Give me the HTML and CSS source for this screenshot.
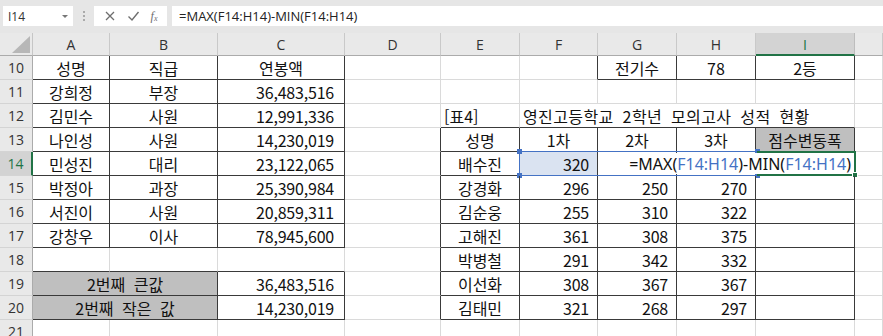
FILE: index.html
```html
<!DOCTYPE html>
<html lang="ko">
<head>
<meta charset="utf-8">
<title>Excel</title>
<link rel="stylesheet" href="styles.css">
</head>
<body>
<div class="app">
  <div class="fbar">
    <div class="namebox"><span>I14</span><span class="dd"></span></div>
    <div class="sep"><i></i><i></i><i></i></div>
    <div class="btns">
      <svg width="12" height="12" viewBox="0 0 12 12"><path d="M2 2L10 10M10 2L2 10" stroke="#6e6e6e" stroke-width="1.3" fill="none"/></svg>
      <svg width="13" height="12" viewBox="0 0 13 12"><path d="M1.5 6.5L5 10L11.5 2" stroke="#6e6e6e" stroke-width="1.4" fill="none"/></svg>
      <span class="fx"><i>f</i><sub>x</sub></span>
    </div>
    <div class="finput">=MAX(F14:H14)-MIN(F14:H14)</div>
  </div>

  <div class="sheet">
    <div class="row hdr">
      <div class="corner"><div class="tri"></div></div>
      <div class="ch">A</div><div class="ch">B</div><div class="ch">C</div><div class="ch">D</div><div class="ch">E</div><div class="ch">F</div><div class="ch">G</div><div class="ch">H</div><div class="ch sel">I</div><div class="ch"></div>
    </div>

    <div class="row">
      <div class="rh">10</div>
      <div class="c ctr bb br">성명</div><div class="c ctr bb br">직급</div><div class="c ctr bb br">연봉액</div>
      <div class="c"></div><div class="c"></div><div class="c br"></div>
      <div class="c ctr bb br">전기수</div><div class="c ctr bb br">78</div><div class="c ctr bb br">2등</div><div class="c"></div>
    </div>

    <div class="row">
      <div class="rh">11</div>
      <div class="c ctr bb br">강희정</div><div class="c ctr bb br">부장</div><div class="c num numc bb br">36,483,516</div>
      <div class="c"></div><div class="c"></div><div class="c"></div><div class="c"></div><div class="c"></div><div class="c"></div><div class="c"></div>
    </div>

    <div class="row">
      <div class="rh">12</div>
      <div class="c ctr bb br">김민수</div><div class="c ctr bb br">사원</div><div class="c num numc bb br">12,991,336</div>
      <div class="c"></div>
      <div class="c lft bb">[표4]</div>
      <div class="c lft bb span4 title">영진고등학교 2학년 모의고사 성적 현황</div>
      <div class="c"></div>
    </div>

    <div class="row">
      <div class="rh">13</div>
      <div class="c ctr bb br">나인성</div><div class="c ctr bb br">사원</div><div class="c num numc bb br">14,230,019</div>
      <div class="c br"></div>
      <div class="c ctr bb br">성명</div><div class="c ctr bb br">1차</div><div class="c ctr bb br">2차</div><div class="c ctr bb br">3차</div><div class="c ctr bb br gray">점수변동폭</div>
      <div class="c"></div>
    </div>

    <div class="row r14">
      <div class="rh sel">14</div>
      <div class="c ctr bb br">민성진</div><div class="c ctr bb br">대리</div><div class="c num numc bb br">23,122,065</div>
      <div class="c br"></div>
      <div class="c ctr bb br">배수진</div><div class="c num bb br hl">320</div><div class="c bb br"></div><div class="c bb br"></div><div class="c bb br"></div>
      <div class="c"></div>
      <div class="refbox"><i class="h tl"></i><i class="h tr"></i><i class="h bl"></i><i class="h br2"></i></div>
      <div class="active"><i class="fill"></i></div>
      <div class="editor">=MAX(<span class="ref">F14:H14</span>)-MIN(<span class="ref">F14:H14</span>)</div>
    </div>

    <div class="row">
      <div class="rh">15</div>
      <div class="c ctr bb br">박정아</div><div class="c ctr bb br">과장</div><div class="c num numc bb br">25,390,984</div>
      <div class="c br"></div>
      <div class="c ctr bb br">강경화</div><div class="c num bb br">296</div><div class="c num bb br">250</div><div class="c num bb br">270</div><div class="c bb br"></div>
      <div class="c"></div>
    </div>

    <div class="row">
      <div class="rh">16</div>
      <div class="c ctr bb br">서진이</div><div class="c ctr bb br">사원</div><div class="c num numc bb br">20,859,311</div>
      <div class="c br"></div>
      <div class="c ctr bb br">김순웅</div><div class="c num bb br">255</div><div class="c num bb br">310</div><div class="c num bb br">322</div><div class="c bb br"></div>
      <div class="c"></div>
    </div>

    <div class="row">
      <div class="rh">17</div>
      <div class="c ctr bb br">강창우</div><div class="c ctr bb br">이사</div><div class="c num numc bb br">78,945,600</div>
      <div class="c br"></div>
      <div class="c ctr bb br">고해진</div><div class="c num bb br">361</div><div class="c num bb br">308</div><div class="c num bb br">375</div><div class="c bb br"></div>
      <div class="c"></div>
    </div>

    <div class="row">
      <div class="rh">18</div>
      <div class="c bb"></div><div class="c bb"></div><div class="c bb"></div>
      <div class="c br"></div>
      <div class="c ctr bb br">박병철</div><div class="c num bb br">291</div><div class="c num bb br">342</div><div class="c num bb br">332</div><div class="c bb br"></div>
      <div class="c"></div>
    </div>

    <div class="row">
      <div class="rh">19</div>
      <div class="c ctr bb br gray span2 wide">2번째 큰값</div><div class="c num numc bb br">36,483,516</div>
      <div class="c br"></div>
      <div class="c ctr bb br">이선화</div><div class="c num bb br">308</div><div class="c num bb br">367</div><div class="c num bb br">367</div><div class="c bb br"></div>
      <div class="c"></div>
    </div>

    <div class="row">
      <div class="rh">20</div>
      <div class="c ctr bb br gray span2 wide">2번째 작은 값</div><div class="c num numc bb br">14,230,019</div>
      <div class="c br"></div>
      <div class="c ctr bb br">김태민</div><div class="c num bb br">321</div><div class="c num bb br">268</div><div class="c num bb br">297</div><div class="c bb br"></div>
      <div class="c"></div>
    </div>

    <div class="row">
      <div class="rh">21</div>
      <div class="c"></div><div class="c"></div><div class="c"></div><div class="c"></div><div class="c"></div><div class="c"></div><div class="c"></div><div class="c"></div><div class="c"></div><div class="c"></div>
    </div>
  </div>
</div>
</body>
</html>
```

FILE: styles.css
```css
* { box-sizing: border-box; margin: 0; padding: 0; }
html, body { width: 883px; height: 336px; overflow: hidden; background: #fff; }
body { font-family: "Noto Sans CJK KR", "Noto Sans", sans-serif; color: #111; }

.app { width: 883px; height: 336px; overflow: hidden; }

/* formula bar */
.fbar {
  height: 33px;
  background: #e6e6e6;
  display: flex;
  align-items: flex-start;
  padding-top: 6px;
}
.namebox {
  margin-left: 3px;
  width: 70px;
  height: 20px;
  background: #fff;
  display: flex;
  align-items: center;
  justify-content: space-between;
  padding: 0 5px 0 5px;
  font: 12px "Open Sans", sans-serif;
  color: #333;
}
.dd {
  width: 0; height: 0;
  border-left: 3px solid transparent;
  border-right: 3px solid transparent;
  border-top: 3px solid #777;
}
.sep {
  width: 21px;
  height: 20px;
  display: flex;
  flex-direction: column;
  align-items: center;
  justify-content: center;
  gap: 2px;
}
.sep i { width: 2px; height: 2px; background: #aaa; display: block; }
.btns {
  width: 73px;
  height: 20px;
  background: #fff;
  display: flex;
  align-items: center;
  justify-content: space-around;
  padding: 0 4px;
}
.fx { font: italic 12px "Liberation Serif", serif; color: #6e6e6e; }
.fx i { font-style: italic; }
.fx sub { font-size: 8px; vertical-align: -1px; }
.finput {
  margin-left: 5px;
  flex: 1;
  height: 20px;
  background: #fff;
  font: 13px "Open Sans", sans-serif;
  color: #222;
  padding-left: 7px;
  line-height: 20px;
}

/* sheet */
.row {
  display: grid;
  grid-template-columns: 33px 77px 108px 127px 96px 79px 78px 79px 79px 99px 1fr;
  height: 24px;
  position: relative;
}
.row.hdr { height: 23px; }

.corner {
  background: #e9e9e9;
  border-right: 1px solid #c6c6c6;
  border-bottom: 1px solid #ababab;
  position: relative;
}
.tri {
  position: absolute;
  right: 2px; bottom: 2px;
  width: 18px; height: 17px;
  background: #b7b7b7;
  clip-path: polygon(100% 0, 100% 100%, 0 100%);
}
.ch {
  background: #e9e9e9;
  border-right: 1px solid #c9c9c9;
  border-bottom: 1px solid #ababab;
  display: flex;
  align-items: center;
  justify-content: center;
  font: 14px "Open Sans", sans-serif;
  color: #333;
  padding-top: 1px;
}
.ch.sel {
  background: #d3d3d3;
  color: #217346;
  border-bottom: 2px solid #217346;
  border-right-color: #bdbdbd;
}

.rh {
  background: #e9e9e9;
  border-right: 1px solid #ababab;
  border-bottom: 1px solid #d4d4d4;
  display: flex;
  align-items: center;
  justify-content: center;
  font: 14px "Open Sans", sans-serif;
  color: #333;
}
.rh.sel {
  background: #d3d3d3;
  color: #217346;
  border-right: 2px solid #217346;
}

.c {
  border-right: 1px solid #dadada;
  border-bottom: 1px solid #dadada;
  display: flex;
  align-items: center;
  font-size: 16px;
  line-height: 1;
  white-space: nowrap;
  padding-top: 1px;
  overflow: visible;
}
.ctr { justify-content: center; }
.lft { justify-content: flex-start; padding-left: 3px; }
.num { justify-content: flex-end; padding-right: 8px; letter-spacing: -0.2px; }
.numc { padding-right: 10px; }
.bb { border-bottom-color: #3a3a3a; }
.br { border-right-color: #3a3a3a; }
.gray { background: #bfbfbf; }
.span2 { grid-column: span 2; }
.span4 { grid-column: span 4; }
.wide { word-spacing: 4px; }
.title { word-spacing: 4px; letter-spacing: 0.4px; }
.hl { background: #dae3f1; }

/* in-cell editing overlays on row 14 */
.refbox {
  position: absolute;
  left: 519px;
  top: -1px;
  width: 239px;
  height: 25px;
  border: 1px solid #4472c4;
  pointer-events: none;
}
.h {
  position: absolute;
  width: 5px; height: 5px;
  background: #4472c4;
  display: block;
}
.h.tl { left: -3px; top: -3px; }
.h.tr { right: -3px; top: -3px; }
.h.bl { left: -3px; bottom: -3px; }
.h.br2 { right: -3px; bottom: -3px; }
.active {
  position: absolute;
  left: 757px;
  top: -1px;
  width: 99px;
  height: 25px;
  border: 2px solid #217346;
}
.fill {
  position: absolute;
  right: -4px; bottom: -4px;
  width: 6px; height: 6px;
  background: #217346;
  border: 1px solid #fff;
  display: block;
}
.editor {
  position: absolute;
  left: 598px;
  top: 1px;
  width: 255px;
  height: 21px;
  background: #fff;
  display: flex;
  align-items: center;
  justify-content: flex-end;
  padding: 0 2px 0 0;
  font: 16px "Noto Sans", sans-serif;
  line-height: 1;
  white-space: nowrap;
  color: #111;
}
.ref { color: #4472c4; }
```
